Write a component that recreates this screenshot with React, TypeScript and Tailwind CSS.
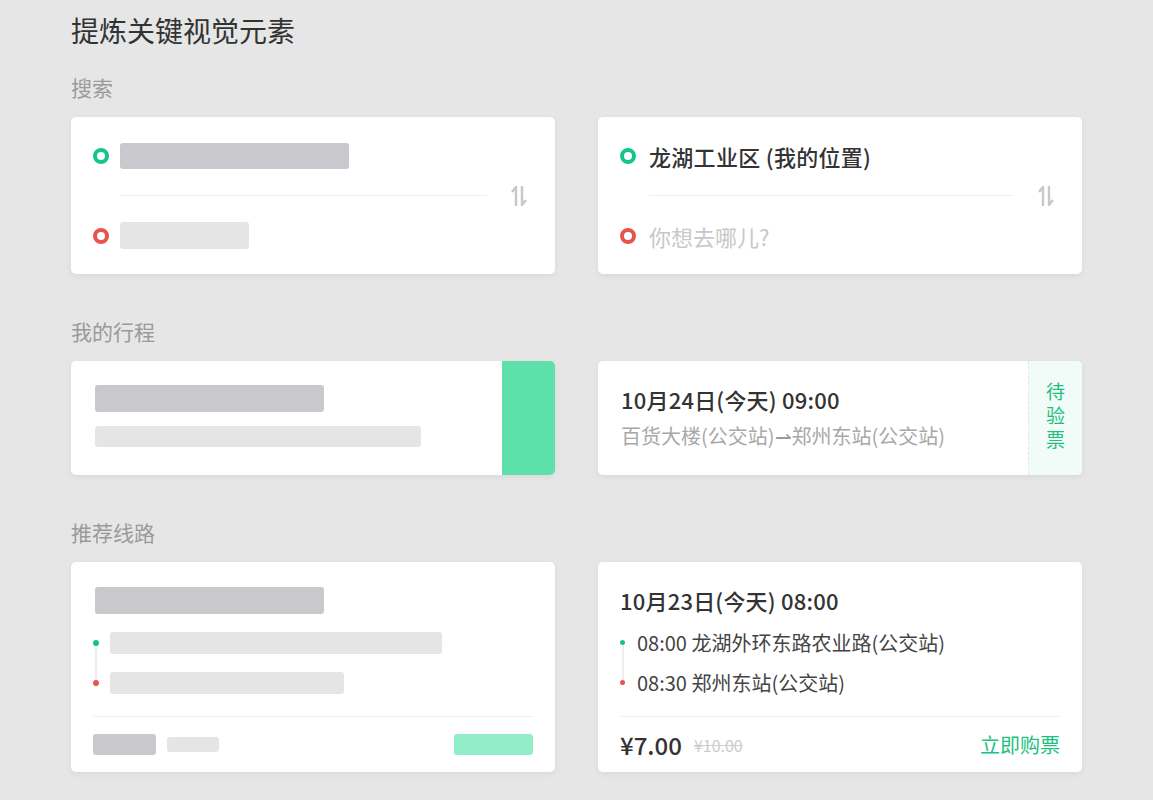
import React from "react";

const font = { fontFamily: '"Noto Sans CJK SC", "Noto Sans", sans-serif' };

function Ring({ color }: { color: "green" | "red" }) {
  return (
    <span
      className={
        "h-[16px] w-[16px] shrink-0 rounded-full border-[4px] " +
        (color === "green" ? "border-[#17c487]" : "border-[#e9534f]")
      }
    />
  );
}

function SwapIcon() {
  return (
    <svg width="22" height="24" viewBox="0 0 22 24" className="shrink-0">
      <path d="M7 22V3L3 8" fill="none" stroke="#c8c8cc" strokeWidth="2.4" strokeLinejoin="round" />
      <path d="M13 2v19l4-5" fill="none" stroke="#c8c8cc" strokeWidth="2.4" strokeLinejoin="round" />
    </svg>
  );
}

function Card({ children, className = "" }: { children: React.ReactNode; className?: string }) {
  return (
    <div className={"rounded-[5px] bg-white shadow-[0_2px_6px_rgba(0,0,0,0.06)] " + className}>{children}</div>
  );
}

function Label({ children }: { children: React.ReactNode }) {
  return <div className="text-[21px] leading-none text-[#9a9a9a]">{children}</div>;
}

export default function App() {
  return (
    <div className="min-h-[800px] w-full bg-[#e6e6e6] pl-[71px] pt-[16px]" style={font}>
      <h1 className="text-[28px] leading-none text-[#333]">提炼关键视觉元素</h1>

      {/* 搜索 */}
      <div className="mt-[33px]">
        <Label>搜索</Label>
      </div>
      <div className="mt-[19px] grid grid-cols-[484px_484px] gap-x-[43px]">
        <Card className="h-[157px] py-[25px] pl-[22px] pr-[24px]">
          <div className="flex items-center">
            <div className="flex-1">
              <div className="flex h-[27px] items-center gap-[11px]">
                <Ring color="green" />
                <div className="h-[26px] w-[229px] rounded-[3px] bg-[#c9c9cd]" />
              </div>
              <div className="ml-[27px] mr-[22px] my-[26px] h-px bg-[#f0f0f0]" />
              <div className="flex h-[27px] items-center gap-[11px]">
                <Ring color="red" />
                <div className="h-[27px] w-[129px] rounded-[3px] bg-[#e5e5e5]" />
              </div>
            </div>
            <SwapIcon />
          </div>
        </Card>
        <Card className="h-[157px] py-[25px] pl-[22px] pr-[24px]">
          <div className="flex items-center">
            <div className="flex-1">
              <div className="flex h-[27px] items-center gap-[13px]">
                <Ring color="green" />
                <span className="text-[22px] font-medium leading-none tracking-[0.3px] text-[#333]">龙湖工业区 (我的位置)</span>
              </div>
              <div className="ml-[29px] mr-[22px] my-[26px] h-px bg-[#f0f0f0]" />
              <div className="flex h-[27px] items-center gap-[13px]">
                <Ring color="red" />
                <span className="text-[22px] leading-none text-[#c8c8c8]">你想去哪儿?</span>
              </div>
            </div>
            <SwapIcon />
          </div>
        </Card>
      </div>

      {/* 我的行程 */}
      <div className="mt-[47px]">
        <Label>我的行程</Label>
      </div>
      <div className="mt-[19px] grid grid-cols-[484px_484px] gap-x-[43px]">
        <Card className="flex h-[114px] overflow-hidden">
          <div className="flex-1 pl-[24px] pt-[24px]">
            <div className="h-[27px] w-[229px] rounded-[3px] bg-[#c9c9cd]" />
            <div className="mt-[14px] h-[21px] w-[326px] rounded-[3px] bg-[#e5e5e5]" />
          </div>
          <div className="w-[53px] bg-[#5ee0aa]" />
        </Card>
        <Card className="flex h-[114px] overflow-hidden">
          <div className="flex-1 pl-[23px] pt-[27px]">
            <div className="text-[22px] font-medium leading-none tracking-[0.2px] text-[#333]">10月24日(今天) 09:00</div>
            <div className="mt-[16px] text-[20px] leading-none text-[#a8a8a8]">
              百货大楼(公交站)<span className="text-[#9a9a9a]">⇀</span>郑州东站(公交站)
            </div>
          </div>
          <div className="flex w-[54px] items-center justify-center border-l border-dashed border-[#d8efe5] bg-[#f1fbf7]">
            <span className="text-[19px] leading-none tracking-[5px] text-[#1fbf80] [writing-mode:vertical-rl]">
              待验票
            </span>
          </div>
        </Card>
      </div>

      {/* 推荐线路 */}
      <div className="mt-[47px]">
        <Label>推荐线路</Label>
      </div>
      <div className="mt-[19px] grid grid-cols-[484px_484px] gap-x-[43px]">
        <Card className="h-[210px] px-[22px] pt-[25px]">
          <div className="ml-[2px] h-[27px] w-[229px] rounded-[3px] bg-[#c9c9cd]" />
          <div className="mt-[18px] flex">
            <div className="flex w-[6px] flex-col items-center pt-[8px]">
              <span className="h-[6px] w-[6px] rounded-full bg-[#17c487]" />
              <span className="h-[34px] w-[2px] bg-[#eeeeee]" />
              <span className="h-[6px] w-[6px] rounded-full bg-[#e9534f]" />
            </div>
            <div className="ml-[11px] flex-1">
              <div className="h-[22px] w-[332px] rounded-[3px] bg-[#e5e5e5]" />
              <div className="mt-[18px] h-[22px] w-[234px] rounded-[3px] bg-[#e5e5e5]" />
            </div>
          </div>
          <div className="mt-[22px] h-px bg-[#f0f0f0]" />
          <div className="mt-[17px] flex items-center">
            <div className="h-[21px] w-[63px] rounded-[3px] bg-[#c9c9cd]" />
            <div className="ml-[11px] h-[15px] w-[52px] rounded-[3px] bg-[#e5e5e5]" />
            <div className="ml-auto h-[21px] w-[79px] rounded-[3px] bg-[#92eec8]" />
          </div>
        </Card>
        <Card className="h-[210px] px-[22px] pt-[27px]">
          <div className="text-[22px] font-medium leading-none tracking-[0.2px] text-[#333]">10月23日(今天) 08:00</div>
          <div className="mt-[21px] flex">
            <div className="flex w-[5px] flex-col items-center pt-[8px]">
              <span className="h-[5px] w-[5px] rounded-full bg-[#17c487]" />
              <span className="h-[35px] w-[2px] bg-[#eeeeee]" />
              <span className="h-[5px] w-[5px] rounded-full bg-[#e9534f]" />
            </div>
            <div className="ml-[12px] flex-1 text-[20px] leading-none text-[#444]">
              <div className="flex h-[22px] items-center">08:00 龙湖外环东路农业路(公交站)</div>
              <div className="mt-[18px] flex h-[22px] items-center">08:30 郑州东站(公交站)</div>
            </div>
          </div>
          <div className="mt-[22px] h-px bg-[#f0f0f0]" />
          <div className="mt-[16px] flex items-center">
            <span className="text-[24px] font-medium leading-none text-[#333]">¥7.00</span>
            <span className="ml-[12px] text-[16px] leading-none text-[#cccccc] line-through">¥10.00</span>
            <span className="ml-auto text-[20px] leading-none text-[#1fbf80]">立即购票</span>
          </div>
        </Card>
      </div>
    </div>
  );
}
